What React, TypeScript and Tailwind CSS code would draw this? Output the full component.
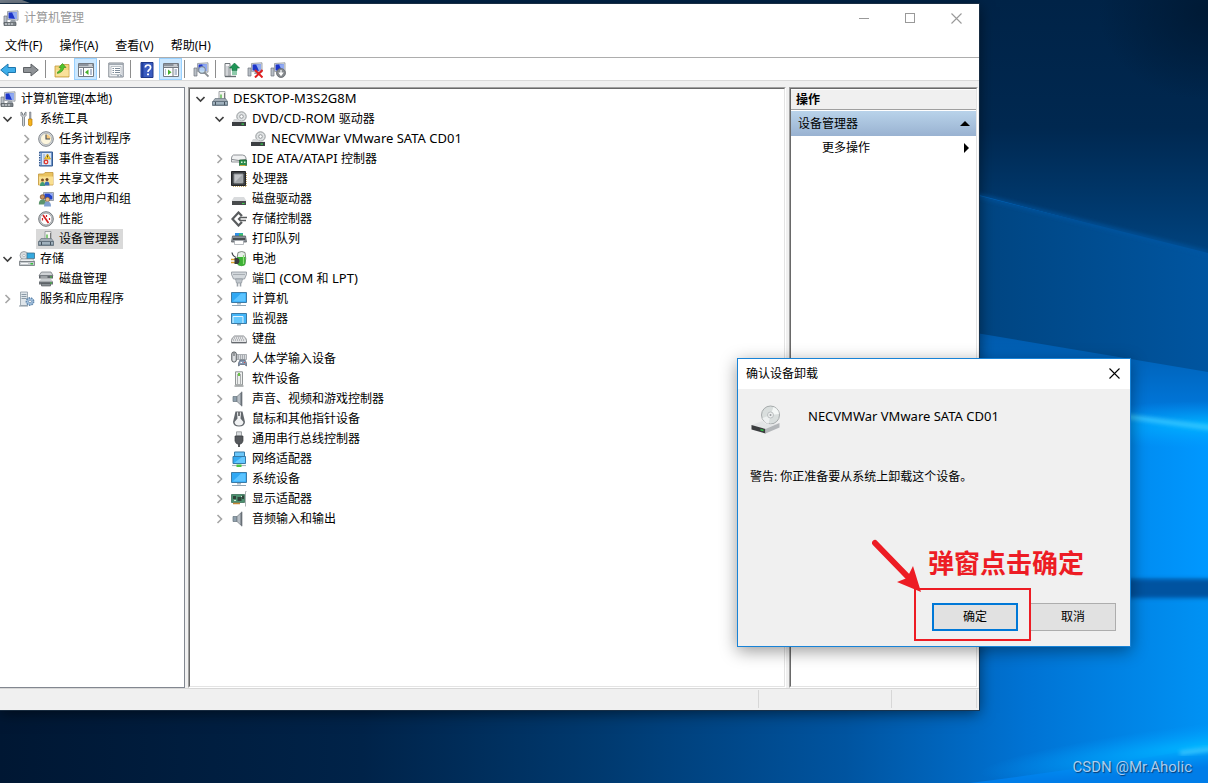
import { useState } from 'react';
import type { ReactNode } from 'react';

const monitorShape = (
  <>
    <path d="M1 6h3v8H1z" fill="#b9bfc6" stroke="#6d747c" strokeWidth=".7" />
    <path d="M4.500 1.500 15 .8v9.400l-10.500-.7z" fill="#dfe3e8" stroke="#8a9098" strokeWidth=".8" />
    <path d="m5.500 2.500 8.500-.6v7.200l-8.500-.5z" fill="#1c35c8" />
    <path d="m9 2.300 5-.4v7.200l-2-.1z" fill="#8fa9f2" />
    <path d="M8 10h4l1 2H7z" fill="#9aa1a9" />
  </>
);

const cdDrive = (
  <>
    <circle cx="10.500" cy="5.500" r="4.700" fill="#dfe2e3" stroke="#94999b" />
    <circle cx="10.500" cy="5.500" r="1.800" fill="#fff" stroke="#8d9294" strokeWidth=".9" />
    <path d="M3 8h4l3 2.500h5v1H1z" fill="#d5d7d9" />
    <path d="M1 11h14v4H1z" fill="#3c3f42" />
    <path d="M10.500 12.500h2.500v1.200h-2.500z" fill="#36d04c" />
  </>
);

const screen = (
  <>
    <path d="M.5 1.500h15v10H.5z" fill="#2fa8f4" stroke="#3c7ba6" />
    <path d="M1.500 10.500 10 2.500h4.500v8z" fill="#5cc4ff" />
    <path d="M6 12h4v1.500H6z" fill="#a9b7c2" />
    <path d="M1 14.500h14" stroke="#8fa5b5" />
  </>
);

const speaker = (
  <>
    <path d="M2 5.500h4v5H2z" fill="#8fa0ad" stroke="#66737d" strokeWidth=".7" />
    <path d="M6 5.500 11 .8v14.400l-5-4.700z" fill="#b9c0c6" stroke="#737a81" strokeWidth=".7" />
    <path d="M9.500 2.500 11 .8v14.400l-1.500-1.800z" fill="#686f76" />
  </>
);

const toolbox = (
  <>
    <path d="M7 .5h6v8H7z" fill="#f4f4f0" stroke="#8b9094" strokeWidth=".8" />
    <path d="M9 3.500v4" stroke="#54b948" strokeWidth="1.400" />
    <path d="M12.500 2v6" stroke="#777" />
    <path d="m3 7.500-2 3h14.500l-2-3z" fill="#a3adb6" stroke="#697580" strokeWidth=".7" />
    <path d="M.5 10.500h15v4H.5z" fill="#8496a3" stroke="#5b6a76" strokeWidth=".8" />
    <path d="M1 12h14" stroke="#bccbd6" />
    <path d="M3.500 11v3m9-3v3" stroke="#45525d" />
  </>
);

const panelFrame = (
  <>
    <path d="M.5 1.500h15v13H.5z" fill="#fff" stroke="#747a82" />
    <path d="M1 2h14v2.500H1z" fill="#8d949d" />
    <path d="M1 5.500h14" stroke="#747a82" />
    <path d="M10.500 3h3.500" stroke="#fff" />
  </>
);

const icons: Record<string, ReactNode> = {
  computer: (
    <>
      {monitorShape}
      <path d="M1 12.500h12v3H1z" fill="#7c8389" stroke="#4e5459" strokeWidth=".7" />
      <path d="M3 13v2m3-2v2m3-2v2" stroke="#e6e9ec" />
    </>
  ),
  tools: (
    <>
      <path d="M2 1v3.500L3.500 6v8.500q1 1.300 2 0V6L7 4.500V1L5.500 2v2h-2V2z" fill="#d0d4d8" stroke="#70767c" strokeWidth=".8" />
      <path d="M10.500 1h1.500v7h-1.500z" fill="#a1a7ad" stroke="#70767c" strokeWidth=".5" />
      <path d="M9.500 8h3.500v6q-1.700 2-3.500 0z" fill="#f6b31c" stroke="#b97d0a" strokeWidth=".7" />
    </>
  ),
  clock: (
    <>
      <circle cx="8" cy="8" r="7.300" fill="#d7dade" stroke="#7d8287" />
      <circle cx="8" cy="8" r="5.600" fill="#fdf6dd" stroke="#a5aaae" strokeWidth=".7" />
      <path d="M8 8h4.500A4.500 4.500 0 0 0 8 3.500z" fill="#f5c77c" />
      <path d="M8 3.500V8h4" fill="none" stroke="#3f4a57" strokeWidth="1.100" />
    </>
  ),
  eventLog: (
    <>
      <path d="M1.500 1h13v14h-13z" fill="#7197cc" stroke="#345b91" />
      <path d="M4 2h9v12H4z" fill="#dbe7f7" />
      <path d="M6 3v10" stroke="#88a3c8" />
      <path d="M.5 3h2m-2 2.500h2m-2 2.500h2m-2 2.500h2m-2 2.500h2" stroke="#eef3fa" />
      <path d="M9.500 3 12.500 8h-6z" fill="#ffd938" stroke="#c18e0a" strokeWidth=".7" />
      <path d="M9.500 4.500v2" stroke="#222" strokeWidth=".8" />
      <circle cx="8" cy="11" r="2.400" fill="#dc3a32" />
      <path d="m7 10 2 2m0-2-2 2" stroke="#fff" strokeWidth=".8" />
    </>
  ),
  sharedFolder: (
    <>
      <path d="M.5 3h5l1.500-1.500h8v12.500H.5z" fill="#e9c25f" stroke="#c0963a" strokeWidth=".8" />
      <path d="M1 5.500h14v8H1z" fill="#f9df91" />
      <circle cx="4.500" cy="9" r="1.500" fill="#7c4f26" />
      <path d="M2 15q0-4 2.500-4T7 15z" fill="#3f9b74" />
      <circle cx="9" cy="8.500" r="1.500" fill="#70441e" />
      <path d="M6.500 14.500q0-4 2.500-4t2.500 4z" fill="#3b6fb8" />
    </>
  ),
  users: (
    <>
      <path d="M5.500 1.500h10v8h-10z" fill="#d9dee5" stroke="#838b96" strokeWidth=".8" />
      <path d="M6.500 2.500h8v6h-8z" fill="#2344c9" />
      <path d="m11 2.500 3.500 3v-3z" fill="#9bb2f7" />
      <circle cx="4.500" cy="6" r="2.300" fill="#c89361" stroke="#6e4422" strokeWidth=".7" />
      <path d="M.8 13.500q0-5 3.700-5t3.700 5z" fill="#5c946b" />
      <circle cx="9.500" cy="8.500" r="2.200" fill="#eab781" stroke="#8a5a2c" strokeWidth=".7" />
      <path d="M6 15.500q0-5 3.500-5t3.500 5z" fill="#7f9fcf" />
    </>
  ),
  performance: (
    <>
      <circle cx="8" cy="8" r="7.300" fill="#c6cacd" stroke="#72777b" />
      <circle cx="8" cy="8" r="5.800" fill="#fff" stroke="#9b9fa3" strokeWidth=".7" />
      <path d="m5 4 5.500 8" stroke="#d32222" strokeWidth="1.700" />
      <path d="M4.500 7v2.500M8.500 4v2m3 1v2" stroke="#d32222" strokeWidth="1.200" />
    </>
  ),
  devices: toolbox,
  storage: (
    <>
      <circle cx="5" cy="4.500" r="4" fill="#d8dcdf" stroke="#8b9195" strokeWidth=".8" />
      <circle cx="5" cy="4.500" r="1.200" fill="#fff" stroke="#979ca0" strokeWidth=".6" />
      <path d="M8 2h7.500v5.500H8z" fill="#35a9df" stroke="#3a6e8c" strokeWidth=".8" />
      <path d="m2 8-1.500 2.500h15L14 8z" fill="#eceef0" stroke="#8d9397" strokeWidth=".6" />
      <path d="M.5 10.500h15v4H.5z" fill="#c4c9cd" stroke="#6f757a" strokeWidth=".8" />
      <path d="M2 12.500h7" stroke="#f7f8f9" />
      <path d="M11.500 12h2.500v1.500h-2.500z" fill="#34c43c" />
    </>
  ),
  diskManagement: (
    <>
      <path d="M3.500 1h9.500l2 3.500H1z" fill="#d0d3d6" stroke="#6a7075" strokeWidth=".7" />
      <path d="M1 4.500h14v3H1z" fill="#60666b" />
      <path d="M2.500 6h7" stroke="#d9dcdf" />
      <path d="m3 8-2 2.500h14L13 8z" fill="#c9cdd0" />
      <path d="M1 10.500h14v3H1z" fill="#6b7075" />
      <path d="M3.500 12.500h9V15h-9z" fill="#898f94" stroke="#4a4f53" strokeWidth=".6" />
      <path d="M12 5.500h2v1h-2zm0 6h2v1h-2z" fill="#44d13f" />
    </>
  ),
  services: (
    <>
      <path d="M1.500 1h7v13.500h-7z" fill="#dfe5ea" stroke="#8e9aa5" strokeWidth=".8" />
      <path d="M2.500 3.500h5m-5 2h5m-5 2h5" stroke="#8b9aa6" />
      <path d="M0 15h9" stroke="#8c98a2" />
      <circle cx="11" cy="10.500" r="3.600" fill="#a9c6e3" stroke="#6389ae" strokeWidth="1.600" strokeDasharray="1.600 .9" />
      <circle cx="11" cy="10.500" r="1.400" fill="#fff" stroke="#54789d" strokeWidth=".7" />
    </>
  ),
  cdDrive,
  ideController: (
    <>
      <path d="M2.500 4h9q3 0 3.500 3v4H.5V7q.3-2.500 2-3z" fill="#f0f1f2" stroke="#85898d" strokeWidth=".9" />
      <path d="M1 8.500q7 2 14 0" fill="none" stroke="#85898d" />
      <path d="M8.500 9h7v5.500h-7z" fill="#2b8c4a" stroke="#155c2c" strokeWidth=".7" />
      <path d="M10 10.500h1.500V12H10zm3 0h1.500V12H13z" fill="#d6f2d6" />
      <path d="M9 14.500h5.500" stroke="#d3aa3f" />
    </>
  ),
  processor: (
    <>
      <path d="M.5.5h14v14H.5z" fill="#3d4043" stroke="#232527" />
      <path d="M3 3h9v9H3z" fill="#c2c5c8" stroke="#8b8f92" />
      <path d="m4 11 7-7v7z" fill="#a2a6a9" />
      <path d="M15.500 2v13M2 15.500h13" stroke="#c9ad6d" strokeDasharray="1 1" />
    </>
  ),
  diskDrive: (
    <>
      <path d="M3 6h10l2.500 4H.5z" fill="#d9dbdd" />
      <path d="M1 10h14v4H1z" fill="#484b4d" />
      <path d="M11 12h2.500v1H11z" fill="#3bd349" />
    </>
  ),
  storageController: (
    <>
      <path d="M11 5 7.500 1.500 1.500 8l6 6.500L11 11" fill="none" stroke="#595c5e" strokeWidth="2.200" />
      <path d="M9 6.500h7M9 9.500h6" stroke="#595c5e" strokeWidth="1.300" />
      <path d="m6.500 8 3-3v6z" fill="#595c5e" />
    </>
  ),
  printer: (
    <>
      <path d="M4 2h8v4H4z" fill="#2d8fe8" />
      <path d="M8 2.500h4V5H8z" fill="#3bc26a" />
      <path d="M1.500 5h13l1 6H.5z" fill="#8b9197" stroke="#5b6166" strokeWidth=".8" />
      <path d="M2 8h12" stroke="#25292c" strokeWidth="1.300" />
      <path d="M3.500 9.500h9v4h-9z" fill="#fff" stroke="#9ba1a6" strokeWidth=".7" />
    </>
  ),
  battery: (
    <>
      <path d="M7 1.500q4-2 7 0 1.500 6 0 12-3.500 2.500-7 0-2-6 0-12z" fill="#e9efe9" stroke="#667067" strokeWidth=".8" />
      <path d="M6 6h8.700q0 5-.9 8-3 2-7 0z" fill="#3db135" />
      <path d="M12.500 4v9" stroke="#8de07c" strokeWidth="1.200" />
      <path d="M1 1.500q.5 3.500 4 5" fill="none" stroke="#42474a" strokeWidth="1.300" />
      <path d="M0 8.500h4m-4 3h4" stroke="#d9a02a" strokeWidth="1.400" />
      <path d="M3.500 7h3.500q3 3 0 6H3.500z" fill="#3a3d3e" />
    </>
  ),
  port: (
    <>
      <path d="M.5 1h15v2.500L13.500 8h-11L.5 3.500z" fill="#d3d8dc" stroke="#8b9299" strokeWidth=".8" />
      <path d="M2.500 3.500h11" stroke="#7b828a" strokeDasharray="1 1" />
      <path d="M4.500 8h7l-1 4h-5z" fill="#c0c6cc" stroke="#8b9299" strokeWidth=".7" />
      <path d="M6.500 12v3.500m3-3.500v3.500" stroke="#9ba2a9" strokeWidth="1.600" />
    </>
  ),
  screen,
  display: (
    <>
      <path d="M.5 2.500h15v10H.5z" fill="#43b5f8" stroke="#3c7ba6" />
      <path d="M2 12V5.500h10V12" fill="#64c8fd" stroke="#e2f4ff" />
      <path d="M6 13h4v1.500H6z" fill="#8fa5b5" />
    </>
  ),
  keyboard: (
    <>
      <path d="M3.500 5h9q3 2 3 4.500V12H.5V9.500Q.5 7 3.500 5z" fill="#e3e4e6" stroke="#7e8286" strokeWidth=".9" />
      <path d="M3 7h10M2 9h12" stroke="#8c9094" strokeDasharray="1 1" />
      <path d="M1 11.500h14" stroke="#65696e" />
    </>
  ),
  hid: (
    <>
      <rect x=".8" y="1" width="4.500" height="10" rx="2" fill="#dcdfe1" stroke="#4e5357" />
      <path d="M3 1.500V5" stroke="#4e5357" />
      <path d="M6 3.500h9.500v5H6z" fill="#d9dcdf" stroke="#8f9499" strokeWidth=".7" />
      <path d="M7 5h8m-8 2h8" stroke="#787d82" strokeDasharray="1 1" />
      <path d="M9 9h5q2 2.500 1.500 6l-2-1.500h-4L7.500 15Q7 11.500 9 9z" fill="#8598b3" stroke="#515c6c" strokeWidth=".7" />
      <path d="M9.500 11.500h1.500" stroke="#fff" />
      <path d="M13 11.500h1" stroke="#e44c38" />
    </>
  ),
  softwareDevice: (
    <>
      <path d="M4.500.8h7v13h-7z" fill="#eef0ef" stroke="#85898a" strokeWidth=".9" />
      <path d="M6.500 3v10m3-10v10" stroke="#9a9e9f" strokeWidth=".8" />
      <path d="M7 2h2v3H7z" fill="#6ac14a" />
      <path d="M3.500 15h9" stroke="#838788" strokeWidth="1.200" />
    </>
  ),
  speaker,
  mouse: (
    <>
      <path d="M4.500.5h7L14 11q-.5 4.500-6 4.500T2 11z" fill="#62676c" />
      <path d="M6 1.500q2-1 4 0l-.5 6 3 3.500q-.5 3.500-4.500 3.500T3.500 11l3-3.500z" fill="#f1f2f3" />
      <path d="M8 1v4" stroke="#33373a" strokeWidth="1.300" />
    </>
  ),
  usb: (
    <>
      <path d="M5.500.8h5V5h-5z" fill="#dbdee0" stroke="#8b9093" strokeWidth=".8" />
      <path d="M4 5h8v5q-1 3-2.500 3h-3Q5 13 4 10z" fill="#55585c" stroke="#3a3d40" strokeWidth=".7" />
      <path d="M8 13v3" stroke="#44474a" strokeWidth="1.800" />
    </>
  ),
  network: (
    <>
      <path d="M3.500 1h10v7h-10z" fill="#6bc7fa" stroke="#377ba7" />
      <path d="M2 5.500h12.500v7H2z" fill="#33aaf2" stroke="#377ba7" />
      <path d="m3 12 8-6h3v6z" fill="#66c8ff" />
      <path d="M1 14.500h14" stroke="#a8b5bd" strokeWidth="1.200" />
      <path d="M5.500 13.500h5V16h-5z" fill="#4dc443" />
    </>
  ),
  displayAdapter: (
    <>
      <path d="M.5 3.500h13v8H.5z" fill="#4d9170" stroke="#2e664a" strokeWidth=".7" />
      <path d="M2 5h3v3H2zm4.500 1h4v4h-4zM11 4.500h2V8h-2z" fill="#30443a" />
      <path d="M3 9.500h2m5-4h1" stroke="#d5e9d8" />
      <path d="M2 12.500h7" stroke="#c98938" strokeWidth="1.500" />
      <path d="M15.500.5h-1v15" fill="none" stroke="#aeb3b6" />
    </>
  ),
  back: <path d="M8 2v3.500h7.500v5H8V14L.7 8z" fill="#3eaeea" stroke="#1d76ad" />,
  forward: <path d="M8 2v3.500H.5v5H8V14l7.300-6z" fill="#8f9397" stroke="#5d6165" />,
  upFolder: (
    <>
      <path d="M1 4h5l1.500-1.500h7.500V15H1z" fill="#f4d57d" stroke="#c39a3c" strokeWidth=".8" />
      <path d="M2 8h12.500v6H2z" fill="#f9e19a" />
      <path d="M3.500 10q3-1 3.500-4.500H5L8.500 1.500l3.500 4h-2.200q-.5 4.500-6.300 6z" fill="#4fc42d" stroke="#2f8c18" strokeWidth=".6" />
    </>
  ),
  showTree: (
    <>
      {panelFrame}
      <path d="M5.500 6v8.500" stroke="#747a82" />
      <path d="M2 8h2m-2 2h2m-2 2h2m8-4h2m-2 2h2m-2 2h2" stroke="#6f83a6" />
      <path d="M10.500 7.500v5.500L7 10.200z" fill="#45ae2a" />
    </>
  ),
  showActions: (
    <>
      {panelFrame}
      <path d="M10 6v8.500" stroke="#747a82" />
      <path d="M11.500 8h2.500m-2.500 2h2.500m-2.500 2h2.500M2 8h1m-1 2h1m-1 2h1" stroke="#6f83a6" />
      <path d="M5 7.500v5.500l3.500-2.800z" fill="#45ae2a" />
    </>
  ),
  properties: (
    <>
      <path d="M.8 1h14.400v14H.8z" fill="#edf0f3" stroke="#828991" />
      <path d="M1 2.200h14" stroke="#9da5ad" strokeWidth="1.500" />
      <path d="M3 4.500h10v8H3z" fill="#fff" stroke="#a4abb2" strokeWidth=".7" />
      <path d="M4.500 6.500H6m-1.500 2H6m-1.500 2H6m1-4h5m-5 2h5m-5 2h5M9 13.800h2m1 0h2" stroke="#7d8b99" />
    </>
  ),
  help: (
    <>
      <path d="M2 .5h12v15H2z" fill="#3a5cc0" stroke="#20398a" />
      <path d="M2.500 1h2v14h-2z" fill="#213f9e" />
      <path d="M6.300 5.500Q6.500 3 9 3t2.600 2.400Q11.600 7 10 8q-1 .7-1 2" fill="none" stroke="#fff" strokeWidth="1.700" />
      <path d="M8 11.500h2v1.800H8z" fill="#fff" />
    </>
  ),
  scan: (
    <>
      {monitorShape}
      <circle cx="9" cy="8" r="3.300" fill="#c9e6fb" fillOpacity=".85" stroke="#7f8891" strokeWidth="1.100" />
      <path d="m11.500 10.500 4 4" stroke="#8a8f94" strokeWidth="1.800" />
    </>
  ),
  updateDriver: (
    <>
      <path d="M1 1.500h5v13H1z" fill="#f3f4f5" stroke="#6f7579" />
      <path d="M3 4v10m1.500-10v10" stroke="#9fa5a9" strokeWidth=".8" />
      <path d="M1 14.500h11" stroke="#666c70" strokeWidth="1.400" />
      <path d="m10.500 1 5 5H13v2.500H8V6H5.500z" fill="#1f9556" stroke="#0c6c3a" strokeWidth=".6" />
      <path d="M8 10h5m-5 2h5" stroke="#1f9556" />
    </>
  ),
  uninstall: (
    <>
      {monitorShape}
      <path d="m8 8 7.500 7.500m0-7.500L8 15.500" stroke="#e02020" strokeWidth="2" />
    </>
  ),
  disable: (
    <>
      {monitorShape}
      <circle cx="11" cy="11" r="4.500" fill="#85898d" stroke="#66696d" strokeWidth=".8" />
      <path d="M11 8v3.500M9.500 11.200l1.500 2 1.500-2z" fill="#fff" stroke="#fff" strokeWidth="1.200" />
    </>
  ),
};

function Icon({ name }: { name: string }) {
  return (
    <svg viewBox="0 0 16 16" className="h-4 w-4 shrink-0" aria-hidden="true">
      {icons[name]}
    </svg>
  );
}

type Node = { label: string; icon: string; depth: number; state?: 'open' | 'closed'; selected?: boolean };

const consoleTree: Node[] = [
  { label: '计算机管理(本地)', icon: 'computer', depth: 0 },
  { label: '系统工具', icon: 'tools', depth: 1, state: 'open' },
  { label: '任务计划程序', icon: 'clock', depth: 2, state: 'closed' },
  { label: '事件查看器', icon: 'eventLog', depth: 2, state: 'closed' },
  { label: '共享文件夹', icon: 'sharedFolder', depth: 2, state: 'closed' },
  { label: '本地用户和组', icon: 'users', depth: 2, state: 'closed' },
  { label: '性能', icon: 'performance', depth: 2, state: 'closed' },
  { label: '设备管理器', icon: 'devices', depth: 2, selected: true },
  { label: '存储', icon: 'storage', depth: 1, state: 'open' },
  { label: '磁盘管理', icon: 'diskManagement', depth: 2 },
  { label: '服务和应用程序', icon: 'services', depth: 1, state: 'closed' },
];

const deviceTree: Node[] = [
  { label: 'DESKTOP-M3S2G8M', icon: 'devices', depth: 0, state: 'open' },
  { label: 'DVD/CD-ROM 驱动器', icon: 'cdDrive', depth: 1, state: 'open' },
  { label: 'NECVMWar VMware SATA CD01', icon: 'cdDrive', depth: 2 },
  { label: 'IDE ATA/ATAPI 控制器', icon: 'ideController', depth: 1, state: 'closed' },
  { label: '处理器', icon: 'processor', depth: 1, state: 'closed' },
  { label: '磁盘驱动器', icon: 'diskDrive', depth: 1, state: 'closed' },
  { label: '存储控制器', icon: 'storageController', depth: 1, state: 'closed' },
  { label: '打印队列', icon: 'printer', depth: 1, state: 'closed' },
  { label: '电池', icon: 'battery', depth: 1, state: 'closed' },
  { label: '端口 (COM 和 LPT)', icon: 'port', depth: 1, state: 'closed' },
  { label: '计算机', icon: 'screen', depth: 1, state: 'closed' },
  { label: '监视器', icon: 'display', depth: 1, state: 'closed' },
  { label: '键盘', icon: 'keyboard', depth: 1, state: 'closed' },
  { label: '人体学输入设备', icon: 'hid', depth: 1, state: 'closed' },
  { label: '软件设备', icon: 'softwareDevice', depth: 1, state: 'closed' },
  { label: '声音、视频和游戏控制器', icon: 'speaker', depth: 1, state: 'closed' },
  { label: '鼠标和其他指针设备', icon: 'mouse', depth: 1, state: 'closed' },
  { label: '通用串行总线控制器', icon: 'usb', depth: 1, state: 'closed' },
  { label: '网络适配器', icon: 'network', depth: 1, state: 'closed' },
  { label: '系统设备', icon: 'screen', depth: 1, state: 'closed' },
  { label: '显示适配器', icon: 'displayAdapter', depth: 1, state: 'closed' },
  { label: '音频输入和输出', icon: 'speaker', depth: 1, state: 'closed' },
];

const indents = ['pl-0', 'pl-[19px]', 'pl-[38px]'];

// Latin runs are set one pixel larger than the Chinese text around them
function DeviceText({ text }: { text: string }) {
  return (
    <>
      {text.split(/([A-Za-z0-9/()\- ]+)/).map((part, i) =>
        i % 2 ? <span key={i} className="text-[13px] leading-4">{part}</span> : part
      )}
    </>
  );
}

function Tree({ nodes, label, device }: { nodes: Node[]; label: string; device?: boolean }) {
  return (
    <ul role="tree" aria-label={label}>
      {nodes.map((node, i) => (
        <li
          key={i}
          role="treeitem"
          aria-level={node.depth + 1}
          aria-expanded={node.state ? node.state === 'open' : undefined}
          aria-selected={!!node.selected}
          className={`flex h-5 items-center ${indents[node.depth]}`}
        >
          <span className="flex w-[19px] shrink-0 justify-center pr-px">
            {node.state && (
              <button type="button" aria-label={`展开或折叠 ${node.label}`}>
                <svg viewBox="0 0 10 10" className="h-[10px] w-[10px]" fill="none" strokeWidth="1.600">
                  {node.state === 'open'
                    ? <path d="m1.500 3 4 4 4-4" stroke="#404040" />
                    : <path d="m3.500 1 4 4-4 4" stroke="#a6a6a6" />}
                </svg>
              </button>
            )}
          </span>
          <button
            type="button"
            className={`flex h-5 items-center gap-[5px] whitespace-pre pl-0.5 pr-1 ${node.selected ? 'bg-[#d9d9d9]' : ''}`}
          >
            <Icon name={node.icon} />
            <span className="leading-5">{device ? <DeviceText text={node.label} /> : node.label}</span>
          </button>
        </li>
      ))}
    </ul>
  );
}

function ToolButton({ icon, label, active }: { icon: string; label: string; active?: boolean }) {
  return (
    <button
      type="button"
      aria-label={label}
      title={label}
      className={`flex h-[22px] w-[23px] shrink-0 items-center justify-center pt-px ${active ? 'border border-[#99d1ff] bg-[#cce8ff]' : 'pr-px'}`}
    >
      <Icon name={icon} />
    </button>
  );
}

const Separator = () => <span className="ml-0.5 mr-[5px] h-[18px] w-px shrink-0 bg-[#8d8d8d]" />;

// Classic Win32 sunken edge
function SunkenPanel({ className, children }: { className: string; children: ReactNode }) {
  return (
    <section className={`flex border border-t-[#a0a0a0] border-l-[#a0a0a0] border-r-white border-b-white ${className}`}>
      <div className="min-w-0 flex-1 overflow-hidden border border-t-[#696969] border-l-[#696969] border-r-[#e3e3e3] border-b-[#e3e3e3] bg-white">
        {children}
      </div>
    </section>
  );
}

function Wallpaper() {
  return (
    <svg viewBox="0 0 1208 783" preserveAspectRatio="none" className="absolute inset-0 h-full w-full" aria-hidden="true">
      <defs>
        <linearGradient id="base" x1="0" x2="1" y1="0" y2="0">
          <stop offset="0" stopColor="#001733" />
          <stop offset=".3" stopColor="#002349" />
          <stop offset=".5" stopColor="#003a70" />
          <stop offset=".7" stopColor="#0054a0" />
          <stop offset=".85" stopColor="#0073d4" />
          <stop offset="1" stopColor="#0092f4" />
        </linearGradient>
        <linearGradient id="sky" x1="0" x2="0" y1="0" y2="1">
          <stop offset="0" stopColor="#002347" />
          <stop offset=".5" stopColor="#002850" />
          <stop offset="1" stopColor="#00437f" />
        </linearGradient>
        <radialGradient id="corner">
          <stop offset="0" stopColor="#001a35" />
          <stop offset="1" stopColor="#001a35" stopOpacity="0" />
        </radialGradient>
        <linearGradient id="beam1" x1="0" x2="1" y1="0" y2="0">
          <stop offset="0" stopColor="#00427c" />
          <stop offset="1" stopColor="#0055a0" />
        </linearGradient>
        <linearGradient id="beam2" x1="0" x2="0" y1="0" y2="1">
          <stop offset="0" stopColor="#0058a8" />
          <stop offset="1" stopColor="#007ee6" />
        </linearGradient>
        <linearGradient id="beam3" x1="0" x2="1" y1="0" y2="0">
          <stop offset="0" stopColor="#0086ea" />
          <stop offset="1" stopColor="#0098ff" />
        </linearGradient>
        <radialGradient id="glow">
          <stop offset="0" stopColor="#00b4ff" />
          <stop offset="1" stopColor="#009dff" stopOpacity="0" />
        </radialGradient>
        <filter id="soft" x="-20%" y="-50%" width="140%" height="200%">
          <feGaussianBlur stdDeviation="2" />
        </filter>
      </defs>
      <path d="M0 0h1208v783H0z" fill="url(#base)" />
      <path d="M0 0h1208v255L960 190 0 60z" fill="url(#sky)" />
      <ellipse cx="1208" cy="10" rx="110" ry="90" fill="url(#corner)" />
      <path d="m940 186 268 67v122l-268-46z" fill="url(#beam1)" />
      <path d="m940 186 268 67" stroke="#0056a4" strokeWidth="3" filter="url(#soft)" />
      <path d="m940 327 268 45v57l-268-37z" fill="url(#beam2)" />
      <path d="m1100 411 108 17v150h-108z" fill="url(#beam3)" />
      <ellipse cx="1208" cy="425" rx="150" ry="24" fill="url(#glow)" />
      <path d="m1100 413 120 16" stroke="#3cc8ff" strokeWidth="4" filter="url(#soft)" />
      <path d="M1100 579h120v19h-120z" fill="#0052a0" filter="url(#soft)" />
      <path d="M970 783q140-18 238-36v36z" fill="#007de8" />
      <ellipse cx="1208" cy="745" rx="230" ry="22" fill="url(#glow)" transform="rotate(-7 1208 745)" />
      <path d="m1180 753 40-5" stroke="#4fd2ff" strokeWidth="3" filter="url(#soft)" />
      <path d="M0 0h22l8 3H0z" fill="#75808d" />
    </svg>
  );
}

function ConfirmDialog({ onClose }: { onClose: () => void }) {
  return (
    <div
      role="dialog"
      aria-labelledby="dialog-title"
      className="absolute bottom-[136px] right-[77px] flex h-[289px] w-[394px] flex-col border border-[#1883d7] bg-[#f0f0f0] shadow-[0_4px_16px_rgba(0,0,0,0.4)]"
    >
      <header className="flex h-[30px] items-center justify-between bg-white pl-2">
        <h2 id="dialog-title">确认设备卸载</h2>
        <button type="button" aria-label="关闭" onClick={onClose} className="flex h-full w-[31px] items-center justify-center pb-px">
          <svg viewBox="0 0 11 11" className="h-[11px] w-[11px]" stroke="#000" strokeWidth="1.100">
            <path d="m.5.5 10 10m0-10-10 10" />
          </svg>
        </button>
      </header>
      <div className="flex gap-6 pl-3 pt-4">
        <svg viewBox="0 0 32 30" className="h-[30px] w-8" aria-hidden="true">
          <circle cx="20.500" cy="10" r="9" fill="#d9dedd" stroke="#a5aaab" />
          <path d="m20.500 10 3-8q5 2 5.500 7z" fill="#f4f7f6" />
          <path d="m20.500 10-8 3q2 5 6 6z" fill="#eef1f1" />
          <circle cx="20.500" cy="10" r="3" fill="#eceeee" stroke="#b0b5b6" strokeWidth=".8" />
          <circle cx="20.500" cy="10" r="1" fill="#999ea0" />
          <path d="m1.500 20 11-4q2 4 9 3.500l8-1.500-14 6z" fill="#e3e5e6" />
          <path d="m1.500 20 14 4v4.500l-14-4z" fill="#3b3d3f" />
          <path d="m15.500 24 14-6v4.500l-14 6z" fill="#b3b6b9" />
          <path d="m10.500 24 3 .8v1.500l-3-.8z" fill="#32c845" />
        </svg>
        <p className="pl-0.5 text-[13px] leading-[22px]">NECVMWar VMware SATA CD01</p>
      </div>
      <p className="mt-[34px] pl-3">警告: 你正准备要从系统上卸载这个设备。</p>
      <div className="mt-auto flex justify-end gap-3 pb-[15px] pr-[14px]">
        <div className="relative z-10">
          <button type="button" onClick={onClose} className="h-7 w-[86px] border-2 border-[#0078d7] bg-[#e1e1e1]">
            确定
          </button>
          <div className="pointer-events-none absolute -bottom-[10px] -left-[18px] -right-[13px] -top-[15px] border-2 border-[#ed1c24]" />
          <p className="pointer-events-none absolute -left-1 -top-[59px] whitespace-nowrap text-[26px] font-bold leading-[38px] text-[#ed1c24]">
            弹窗点击确定
          </p>
          <svg viewBox="0 0 52 54" className="pointer-events-none absolute -left-[60px] -top-[64px] h-[54px] w-[52px]" aria-hidden="true">
            <path d="m3 4 34 35" stroke="#ed1c24" strokeWidth="6" strokeLinecap="round" />
            <path d="M49 53 25 43l10-4 6-12z" fill="#ed1c24" />
          </svg>
        </div>
        <button type="button" onClick={onClose} className="h-7 w-[86px] border border-[#adadad] bg-[#e1e1e1]">
          取消
        </button>
      </div>
    </div>
  );
}

export default function App() {
  const [dialogOpen, setDialogOpen] = useState(true);

  return (
    <div className="relative flex h-screen flex-col overflow-hidden bg-[#001f45] pb-[73px] pr-[229px] pt-1 font-['Noto_Sans','Noto_Sans_CJK_SC',sans-serif] text-[12px] leading-4 text-black">
      <Wallpaper />

      <main className="relative flex min-h-0 flex-1 flex-col bg-[#f0f0f0] shadow-[0_0_0_1px_rgba(30,50,70,0.8),0_3px_14px_rgba(0,0,0,0.55)]">
        <header className="flex h-7 shrink-0 items-center bg-white pl-[3px]">
          <Icon name="computer" />
          <h1 className="flex-1 pl-[5px] text-[#999]">计算机管理</h1>
          <button type="button" aria-label="最小化" className="flex h-full w-[46px] items-center justify-center">
            <span className="h-px w-[10px] bg-[#999]" />
          </button>
          <button type="button" aria-label="最大化" className="flex h-full w-[46px] items-center justify-center">
            <span className="h-[10px] w-[10px] border border-[#999]" />
          </button>
          <button type="button" aria-label="关闭" className="flex h-full w-[46px] items-center justify-center">
            <svg viewBox="0 0 11 11" className="h-[11px] w-[11px]" stroke="#999" strokeWidth="1.100">
              <path d="m.5.5 10 10m0-10-10 10" />
            </svg>
          </button>
        </header>

        <nav aria-label="菜单" className="flex h-[26px] shrink-0 items-center gap-[17px] border-b border-[#adadad] bg-white pl-[5px] pt-0.5">
          <button type="button">文件(F)</button>
          <button type="button">操作(A)</button>
          <button type="button">查看(V)</button>
          <button type="button">帮助(H)</button>
        </nav>

        <div role="toolbar" aria-label="工具栏" className="flex h-[23px] shrink-0 items-center border-b border-[#dadada] bg-white">
          <div className="-ml-[3px] flex items-center">
            <ToolButton icon="back" label="后退" />
            <ToolButton icon="forward" label="前进" />
            <Separator />
            <ToolButton icon="upFolder" label="向上一级" />
            <ToolButton icon="showTree" label="显示/隐藏控制台树" active />
            <Separator />
            <ToolButton icon="properties" label="属性" />
            <Separator />
            <ToolButton icon="help" label="帮助" />
            <ToolButton icon="showActions" label="显示/隐藏操作窗格" active />
            <Separator />
            <ToolButton icon="scan" label="扫描检测硬件改动" />
            <Separator />
            <ToolButton icon="updateDriver" label="更新驱动程序" />
            <ToolButton icon="uninstall" label="卸载设备" />
            <ToolButton icon="disable" label="禁用设备" />
          </div>
        </div>

        <div className="flex min-h-0 flex-1 gap-[3px] pr-px pt-[6px]">
          <aside className="w-[185px] shrink-0 overflow-hidden border border-l-0 border-[#828790] bg-white pt-px">
            <div className="-ml-[21px]">
              <Tree nodes={consoleTree} label="控制台树" />
            </div>
          </aside>

          <SunkenPanel className="min-w-0 flex-1">
            <div className="pl-px">
              <Tree nodes={deviceTree} label="设备" device />
            </div>
          </SunkenPanel>

          <SunkenPanel className="w-[189px] shrink-0">
            <h2 className="h-[21px] border-b border-t border-b-[#a0a0a0] border-t-white bg-[#f0f0f0] pl-[5px] font-bold leading-5">操作</h2>
            <button type="button" className="mt-px flex h-[25px] w-full items-center justify-between bg-linear-to-b from-[#b9d3ea] to-[#99b2d1] pl-[7px] pr-[6px]">
              设备管理器
              <svg viewBox="0 0 10 5" className="h-[5px] w-[10px]"><path d="M5 0 10 5H0z" /></svg>
            </button>
            <button type="button" className="flex h-6 w-full items-center justify-between pl-[31px] pr-[7px]">
              更多操作
              <svg viewBox="0 0 5 10" className="h-[10px] w-[5px]"><path d="M0 0 5 5 0 10z" /></svg>
            </button>
          </SunkenPanel>
        </div>

        <footer className="flex h-[22px] shrink-0 border-t border-[#d7d7d7] pb-0.5 pr-0.5 pt-px">
          <span className="flex-1" />
          <span className="w-[133px] border-l border-[#d7d7d7]" />
          <span className="w-[86px] border-x border-[#d7d7d7]" />
        </footer>
      </main>

      {dialogOpen && <ConfirmDialog onClose={() => setDialogOpen(false)} />}

      <p className="absolute bottom-1 right-4 font-[Roboto,sans-serif] text-[15px] leading-6 text-[#a9cdf0] [text-shadow:1px_1px_1px_#0a3c70]">
        CSDN @Mr.Aholic
      </p>
    </div>
  );
}
